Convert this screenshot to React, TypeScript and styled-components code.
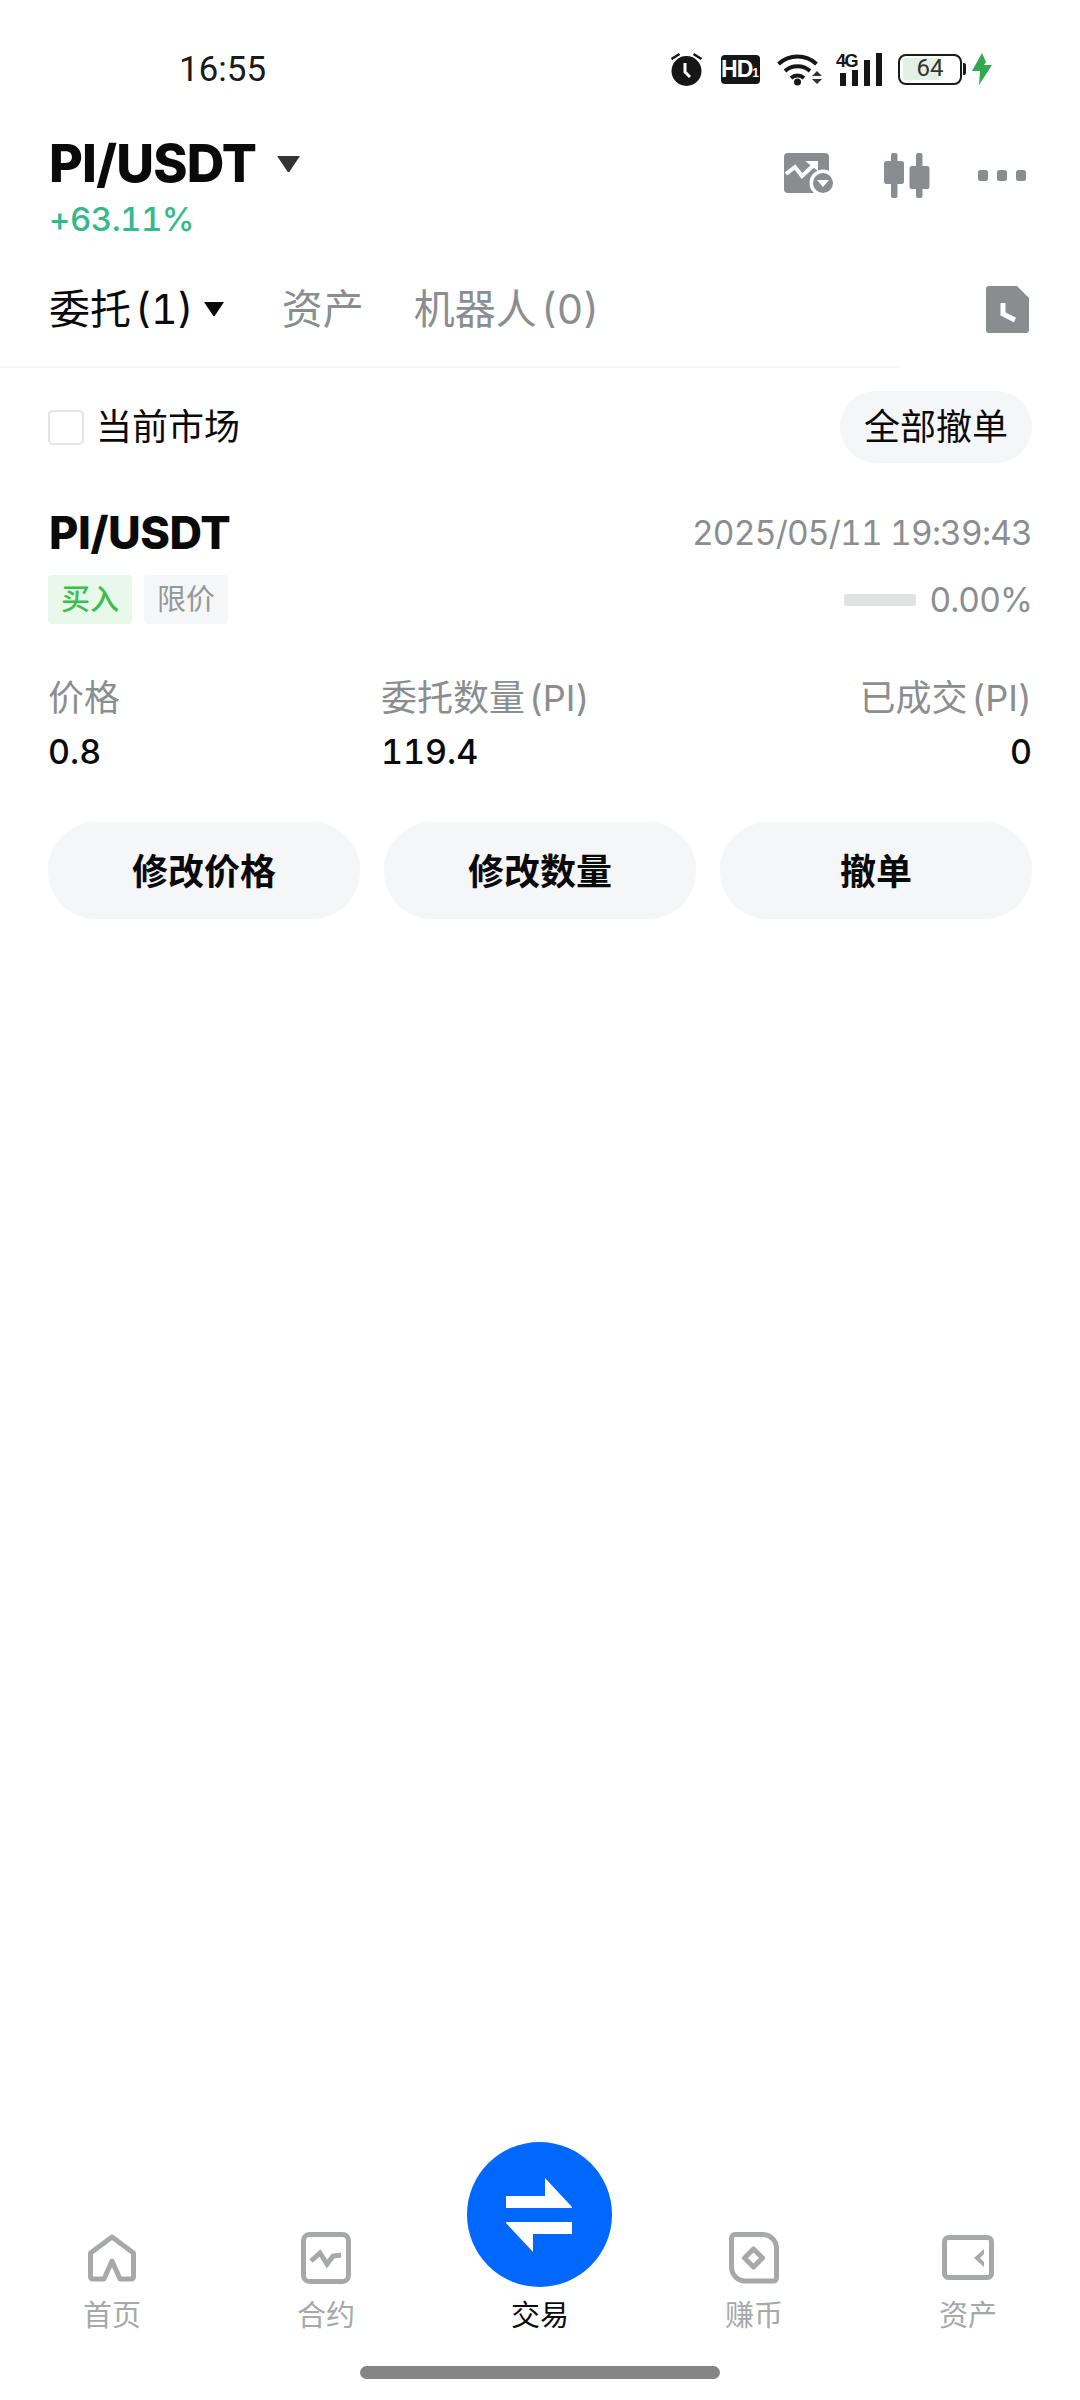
import React from "react";
import styled, { createGlobalStyle } from "styled-components";

const FONT = `Inter, "Noto Sans CJK SC", sans-serif`;

const GlobalStyle = createGlobalStyle`
  html, body {
    margin: 0;
    padding: 0;
    background: #fff;
  }
  * {
    box-sizing: border-box;
  }
`;

const Page = styled.div`
  width: 1080px;
  height: 2400px;
  display: flex;
  flex-direction: column;
  background: #fff;
  font-family: ${FONT};
  font-variant-numeric: tabular-nums;
  color: #0a0a0a;
  overflow: hidden;
`;

/* status bar */
const StatusBar = styled.div`
  height: 132px;
  padding: 6px 88px 0 179px;
  display: flex;
  align-items: center;
  justify-content: space-between;
`;
const Clock = styled.div`
  font-size: 35px;
  line-height: 1;
  color: #1a1a1a;
  font-family: Roboto, sans-serif;
`;
const StatusIcons = styled.div`
  display: flex;
  align-items: center;
`;
const HdBadge = styled.div`
  width: 39px;
  height: 29px;
  margin: 0 17.5px;
  border-radius: 4px;
  background: #161616;
  color: #fff;
  font: 700 23px/29px "Liberation Sans Narrow", "Liberation Sans", sans-serif;
  letter-spacing: -1px;
  text-align: center;
  white-space: nowrap;
  small {
    font-size: 12px;
    letter-spacing: 0;
  }
`;
const WifiGap = styled.div`
  width: 14px;
`;
const Battery = styled.div`
  width: 64px;
  height: 31px;
  margin-left: 16px;
  border: 2.5px solid #1a1a1a;
  border-radius: 8px;
  padding: 2.5px;
`;
const BatteryFill = styled.div`
  height: 100%;
  border-radius: 3px;
  background: linear-gradient(90deg, #e3f1e5 0 66%, #fff 66%);
  color: #333;
  font: 400 24px/21px Roboto, sans-serif;
  text-align: center;
`;
const BatteryTip = styled.div`
  width: 3px;
  height: 12px;
  margin: 0 6px 0 1px;
  border-radius: 0 2px 2px 0;
  background: #1a1a1a;
`;

/* pair header */
const PairHeader = styled.div`
  height: 118px;
  padding: 0 54px 0 49px;
  display: flex;
  justify-content: space-between;
`;
const PairTitleRow = styled.div`
  display: flex;
  align-items: center;
  height: 64px;
  gap: 21px;
`;
const PairTitle = styled.div`
  font-size: 52px;
  line-height: 64px;
  font-weight: 800;
  letter-spacing: -0.8px;
`;
const Change = styled.div`
  margin-top: -2px;
  font-size: 33px;
  line-height: 50px;
  font-weight: 500;
  letter-spacing: -0.5px;
  color: #34b98d;
`;
const HeaderActions = styled.div`
  display: flex;
  align-items: center;
  height: 86px;
  gap: 48px;
`;

/* tabs */
const Tabs = styled.div`
  height: 116px;
  padding: 2px 51px 0 49px;
  display: flex;
  align-items: center;
`;
const Tab = styled.div<{ $active?: boolean }>`
  font-size: 41px;
  line-height: 48px;
  word-spacing: -7px;
  margin-right: ${(p) => (p.$active ? "58px" : "50px")};
  color: ${(p) => (p.$active ? "#0a0a0a" : "#8b8e90")};
  display: flex;
  align-items: center;
  gap: 10px;
  white-space: nowrap;
`;
const TabSpacer = styled.div`
  flex: 1;
`;
const Divider = styled.div`
  width: 900px;
  height: 2px;
  background: #f4f5f5;
`;

/* filter */
const FilterRow = styled.div`
  margin-top: 23px;
  padding: 0 48px;
  display: flex;
  align-items: center;
  justify-content: space-between;
`;
const FilterLabel = styled.div`
  display: flex;
  align-items: center;
  gap: 12px;
  font-size: 36px;
  line-height: 44px;
`;
const Checkbox = styled.div`
  width: 36px;
  height: 35px;
  border: 2.5px solid #e3e4e5;
  border-radius: 5px;
`;
const CancelAll = styled.div`
  width: 192px;
  height: 72px;
  border-radius: 36px;
  background: #f5f6f7;
  font-size: 36px;
  line-height: 72px;
  text-align: center;
`;

/* order card */
const Order = styled.div`
  padding: 0 48px;
`;
const OrderTop = styled.div`
  margin-top: 42px;
  display: flex;
  justify-content: space-between;
  align-items: center;
  height: 54px;
`;
const OrderPair = styled.div`
  margin-left: 1px;
  font-size: 45px;
  font-weight: 800;
  letter-spacing: -0.4px;
`;
const OrderTime = styled.div`
  margin-top: 2px;
  font-size: 33.5px;
  letter-spacing: -0.8px;
  color: #8b8e90;
`;
const OrderMeta = styled.div`
  margin-top: 16px;
  display: flex;
  justify-content: space-between;
  align-items: center;
`;
const Tags = styled.div`
  display: flex;
  gap: 12px;
`;
const Tag = styled.div<{ $buy?: boolean }>`
  width: 84px;
  height: 49px;
  border-radius: 4px;
  font-size: 29px;
  line-height: 49px;
  text-align: center;
  font-weight: ${(p) => (p.$buy ? 500 : 400)};
  background: ${(p) => (p.$buy ? "#e8f8ea" : "#f5f6f7")};
  color: ${(p) => (p.$buy ? "#3dbd4f" : "#95989a")};
`;
const Progress = styled.div`
  display: flex;
  align-items: center;
  gap: 13px;
  font-size: 33.5px;
  letter-spacing: -0.9px;
  color: #8b8e90;
`;
const ProgressBar = styled.div`
  width: 72px;
  height: 12px;
  border-radius: 2px;
  background: #dfe1e2;
`;
const Stats = styled.div`
  margin-top: 51px;
  display: grid;
  grid-template-columns: 333px 1fr auto;
`;
const Stat = styled.div<{ $right?: boolean }>`
  text-align: ${(p) => (p.$right ? "right" : "left")};
`;
const StatLabel = styled.div`
  font-size: 36px;
  line-height: 46px;
  word-spacing: -6px;
  color: #8b8e90;
`;
const StatValue = styled.div`
  margin-top: 9px;
  font-size: 34px;
  line-height: 44px;
  font-weight: 500;
`;
const OrderButtons = styled.div`
  margin-top: 48px;
  display: grid;
  grid-template-columns: repeat(3, 312px);
  gap: 24px;
`;
const OrderButton = styled.div`
  height: 97px;
  border-radius: 48px;
  background: #f5f6f7;
  font-size: 36px;
  font-weight: 700;
  line-height: 101px;
  text-align: center;
`;

const Filler = styled.div`
  flex: 1;
`;

/* bottom nav */
const BottomNav = styled.div`
  padding: 0 5px;
  display: grid;
  grid-template-columns: repeat(5, 214px);
  align-items: end;
`;
const NavItem = styled.div<{ $active?: boolean }>`
  display: flex;
  flex-direction: column;
  align-items: center;
  font-size: 29px;
  line-height: 36px;
  color: ${(p) => (p.$active ? "#0a0a0a" : "#a6a8aa")};
`;
const NavIconSlot = styled.div`
  height: 54px;
  margin-bottom: 13px;
  display: flex;
  align-items: center;
`;
const TradeCircle = styled.div`
  width: 145px;
  height: 145px;
  margin: 0 2px 11px 0;
  border-radius: 50%;
  background: #0068ff;
  display: flex;
  align-items: center;
  justify-content: center;
`;
const HomeBar = styled.div`
  width: 360px;
  height: 13px;
  margin: 32px auto 21px;
  border-radius: 7px;
  background: #858585;
`;

const GRAY = "#8a8d90";
const NAV = "#a6a8aa";

const AlarmIcon = () => (
  <svg width="33" height="34" viewBox="0 0 33 34">
    <circle cx="16.500" cy="19" r="15" fill="#161616" />
    <path d="M1.500 7l8-5M31.500 7l-8-5" stroke="#161616" strokeWidth="2.500" />
    <path d="M15 11v9l5 5" stroke="#fff" strokeWidth="3" fill="none" />
  </svg>
);

const WifiIcon = () => (
  <svg width="45" height="34" viewBox="0 0 45 34">
    <path d="M1.500 12a28 28 0 0 1 38 0M8 19a19 19 0 0 1 25 0M14 26a10 10 0 0 1 13 0" stroke="#161616" strokeWidth="4" fill="none" />
    <circle cx="20.500" cy="30" r="3.500" fill="#161616" />
    <path d="M35 24l5-5 5 5zM35 27l5 5 5-5z" fill="#333" />
  </svg>
);

const SignalIcon = () => (
  <svg width="46" height="34" viewBox="0 0 46 34">
    <text x="0" y="15" fontFamily="Liberation Sans, sans-serif" fontWeight="700" fontSize="18" letterSpacing="-1.500" fill="#161616">
      4G
    </text>
    <path d="M4 21h6v13H4zM16 18h6v16h-6zM28 8h6v26h-6zM40 1h6v33h-6z" fill="#161616" />
  </svg>
);

const BoltIcon = () => (
  <svg width="20" height="32" viewBox="0 0 20 32">
    <path d="M10 0L0 18h8l-1 14L20 12h-8l2-3z" fill="#31a94f" />
  </svg>
);

const TriangleDown = ({ w, h, color }: { w: number; h: number; color: string }) => (
  <svg width={w} height={h} viewBox="0 0 20 14">
    <path d="M0 0h20L11 13.500a1.200 1.200 0 0 1-2 0z" fill={color} />
  </svg>
);

const ChartIcon = () => (
  <svg width="52" height="44" viewBox="0 0 52 44">
    <rect x="0" y="0" width="45" height="40" rx="4" fill={GRAY} />
    <path d="M2 21l9-7 7 9 13-12" stroke="#fff" strokeWidth="4" fill="none" />
    <path d="M21 8h13v10z" fill="#fff" />
    <circle cx="39" cy="30" r="13.500" fill="#fff" />
    <circle cx="39" cy="30" r="10" fill={GRAY} />
    <path d="M33 27h12l-6 7z" fill="#fff" />
  </svg>
);

const CandleIcon = () => (
  <svg width="46" height="45" viewBox="0 0 46 45">
    <rect x="7" y="0" width="6.500" height="45" rx="2" fill={GRAY} />
    <rect x="0" y="8" width="20" height="23" rx="2.500" fill={GRAY} />
    <rect x="32" y="0" width="6.500" height="45" rx="2" fill={GRAY} />
    <rect x="25.500" y="13" width="20" height="23" rx="2.500" fill={GRAY} />
  </svg>
);

const DotsIcon = () => (
  <svg width="48" height="11" viewBox="0 0 48 11">
    <rect x="0" y="0" width="10" height="11" rx="2.500" fill={GRAY} />
    <rect x="19" y="0" width="10" height="11" rx="2.500" fill={GRAY} />
    <rect x="38" y="0" width="10" height="11" rx="2.500" fill={GRAY} />
  </svg>
);

const HistoryDocIcon = () => (
  <svg width="43" height="47" viewBox="0 0 43 47">
    <path d="M3 0h28l12 12v32a3 3 0 0 1-3 3H3a3 3 0 0 1-3-3V3a3 3 0 0 1 3-3z" fill={GRAY} />
    <path d="M17 17v11l12 6" stroke="#fff" strokeWidth="5" fill="none" />
  </svg>
);

const HomeIcon = () => (
  <svg width="48" height="48" viewBox="0 0 48 48">
    <path
      d="M24 3L45.500 19V43a2 2 0 0 1-2 2H32L24 27L16 45H4.500a2 2 0 0 1-2-2V19z"
      stroke={NAV}
      strokeWidth="5"
      strokeLinejoin="round"
      fill="none"
    />
  </svg>
);

const ContractIcon = () => (
  <svg width="50" height="52" viewBox="0 0 50 52">
    <rect x="2.500" y="2.500" width="45" height="47" rx="6" stroke={NAV} strokeWidth="5" fill="none" />
    <path d="M10 29L19 21L26 32L32 24L40 23" stroke={NAV} strokeWidth="5" fill="none" />
  </svg>
);

const EarnIcon = () => (
  <svg width="50" height="52" viewBox="0 0 50 52">
    <path
      d="M6 2.500H33a14 14 0 0 1 14.500 14.500V46a3 3 0 0 1-3 3H17A14 14 0 0 1 2.500 35V6a3.500 3.500 0 0 1 3.500-3.500z"
      stroke={NAV}
      strokeWidth="5"
      fill="none"
    />
    <path d="M24.500 17l9 9-9 9-9-9z" stroke={NAV} strokeWidth="5" strokeLinejoin="round" fill="none" />
  </svg>
);

const AssetsIcon = () => (
  <svg width="52" height="46" viewBox="0 0 52 46">
    <rect x="2.500" y="2.500" width="47" height="40" rx="4" stroke={NAV} strokeWidth="5" fill="none" />
    <path d="M32 23l10-9v5l-4 4 4 4v5z" fill={NAV} />
  </svg>
);

const SwapIcon = () => (
  <svg width="68" height="74" viewBox="0 0 68 74">
    <path d="M1 18h39V0l27 29v1H1z" fill="#fff" />
    <path d="M67 56H28v18L1 45v-1h66z" fill="#fff" />
  </svg>
);

const tabs = ["资产", "机器人 (0)"];
const actions = ["修改价格", "修改数量", "撤单"];

const App: React.FC = () => {
  return (
    <Page>
      <GlobalStyle />
      <StatusBar>
        <Clock>16:55</Clock>
        <StatusIcons>
          <AlarmIcon />
          <HdBadge>
            HD<small>1</small>
          </HdBadge>
          <WifiIcon />
          <WifiGap />
          <SignalIcon />
          <Battery>
            <BatteryFill>64</BatteryFill>
          </Battery>
          <BatteryTip />
          <BoltIcon />
        </StatusIcons>
      </StatusBar>

      <PairHeader>
        <div>
          <PairTitleRow>
            <PairTitle>PI/USDT</PairTitle>
            <TriangleDown w={23} h={16} color="#333" />
          </PairTitleRow>
          <Change>+63.11%</Change>
        </div>
        <HeaderActions>
          <ChartIcon />
          <CandleIcon />
          <DotsIcon />
        </HeaderActions>
      </PairHeader>

      <Tabs>
        <Tab $active>
          委托 (1)
          <TriangleDown w={20} h={14} color="#0a0a0a" />
        </Tab>
        {tabs.map((t) => (
          <Tab key={t}>{t}</Tab>
        ))}
        <TabSpacer />
        <HistoryDocIcon />
      </Tabs>
      <Divider />

      <FilterRow>
        <FilterLabel>
          <Checkbox />
          当前市场
        </FilterLabel>
        <CancelAll>全部撤单</CancelAll>
      </FilterRow>

      <Order>
        <OrderTop>
          <OrderPair>PI/USDT</OrderPair>
          <OrderTime>2025/05/11 19:39:43</OrderTime>
        </OrderTop>
        <OrderMeta>
          <Tags>
            <Tag $buy>买入</Tag>
            <Tag>限价</Tag>
          </Tags>
          <Progress>
            <ProgressBar />
            0.00%
          </Progress>
        </OrderMeta>
        <Stats>
          <Stat>
            <StatLabel>价格</StatLabel>
            <StatValue>0.8</StatValue>
          </Stat>
          <Stat>
            <StatLabel>委托数量 (PI)</StatLabel>
            <StatValue>119.4</StatValue>
          </Stat>
          <Stat $right>
            <StatLabel>已成交 (PI)</StatLabel>
            <StatValue>0</StatValue>
          </Stat>
        </Stats>
        <OrderButtons>
          {actions.map((a) => (
            <OrderButton key={a}>{a}</OrderButton>
          ))}
        </OrderButtons>
      </Order>

      <Filler />

      <BottomNav>
        <NavItem>
          <NavIconSlot>
            <HomeIcon />
          </NavIconSlot>
          首页
        </NavItem>
        <NavItem>
          <NavIconSlot>
            <ContractIcon />
          </NavIconSlot>
          合约
        </NavItem>
        <NavItem $active>
          <TradeCircle>
            <SwapIcon />
          </TradeCircle>
          交易
        </NavItem>
        <NavItem>
          <NavIconSlot>
            <EarnIcon />
          </NavIconSlot>
          赚币
        </NavItem>
        <NavItem>
          <NavIconSlot>
            <AssetsIcon />
          </NavIconSlot>
          资产
        </NavItem>
      </BottomNav>
      <HomeBar />
    </Page>
  );
};

export default App;
